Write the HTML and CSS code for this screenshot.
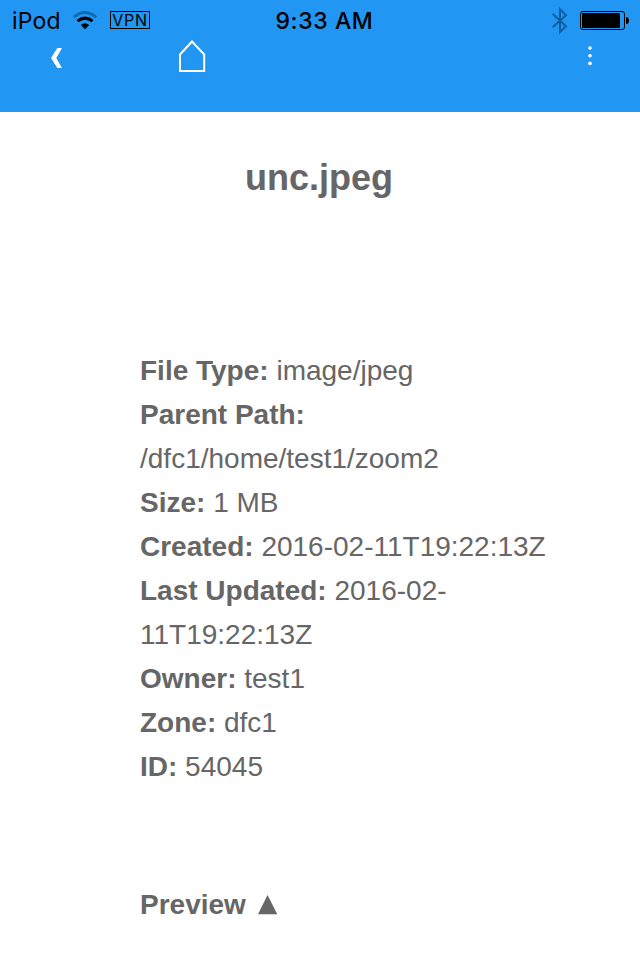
FILE: index.html
```html
<!DOCTYPE html>
<html lang="en">
<head>
<meta charset="utf-8">
<title>unc.jpeg</title>
<link rel="stylesheet" href="styles.css">
</head>
<body>
<header class="header">
  <div class="status">
    <div class="status-left">
      <span class="device">iPod</span>
      <svg class="wifi" width="26" height="20" viewBox="0 0 26 20" fill="none">
        <path d="M.8 7.2Q12 -2.2 23.2 7.2" stroke="#126bb0" stroke-width="2.8"/>
        <path d="M4.5 11.2Q12 5 19.5 11.2" stroke="#000" stroke-width="3"/>
        <path d="M7.9 15Q12 11.4 16.1 15L12 19.2Z" fill="#000"/>
      </svg>
      <span class="vpn">VPN</span>
    </div>
    <span class="time">9:33 AM</span>
    <div class="status-right">
      <svg class="bluetooth" width="16" height="28" viewBox="0 0 16 28" fill="none" stroke="#0d5fa3" stroke-width="2">
        <path d="M.7 7.8L14 20.3L8 26V3.4L14 9.3L.7 21.2"/>
      </svg>
      <svg class="battery" width="50" height="20" viewBox="0 0 50 20">
        <rect x=".5" y="1.5" width="44" height="18" rx="2.5" fill="none" stroke="#000"/>
        <rect x="2" y="3" width="38" height="15" rx="1"/>
        <path d="M46 7Q49 7 49 10.5T46 14Z"/>
      </svg>
    </div>
  </div>
  <nav class="nav">
    <svg class="back" width="12" height="20" viewBox="0 0 12 20" fill="#fff"><path d="M6.3 0H11L5.3 10L11 20H6.3L0 10Z"/></svg>
    <svg class="home" width="28" height="34" viewBox="0 0 28 34" fill="none" stroke="#fff" stroke-width="2"><path d="M2 31V14.5L14 1.5L26.2 14.5V31Z"/></svg>
    <svg class="more" width="4" height="20" viewBox="0 0 4 20" fill="#fff"><circle cx="2" cy="2" r="1.8"/><circle cx="2" cy="9.7" r="1.8"/><circle cx="2" cy="17.4" r="1.8"/></svg>
  </nav>
</header>
<main class="content">
  <h1 class="title">unc.jpeg</h1>
  <div class="details">
    <div><b>File Type:</b> image/jpeg</div>
    <div><b>Parent Path:</b> <span class="path">/dfc1/home/test1/zoom2</span></div>
    <div><b>Size:</b> 1 MB</div>
    <div><b>Created:</b> <span class="path">2016-02-11T19:22:13Z</span></div>
    <div><b>Last Updated:</b> 2016-02-<wbr>11T19:22:13Z</div>
    <div><b>Owner:</b> test1</div>
    <div><b>Zone:</b> dfc1</div>
    <div><b>ID:</b> 54045</div>
  </div>
  <div class="preview">Preview <svg width="20" height="20" viewBox="0 0 20 20" fill="#666"><path d="M9.5 0L19.3 19.3H0Z"/></svg></div>
</main>
</body>
</html>
```
FILE: styles.css
```css
* { box-sizing: border-box; }
body {
  margin: 0;
  background: #fff;
  color: #666;
  font: 28px/44px "Liberation Sans", Arial, sans-serif;
}
svg { display: block; flex: none; }
.header { height: 112px; background: #2196f3; }
.status {
  display: grid;
  grid-template-columns: 1fr auto 1fr;
  align-items: center;
  height: 40px;
  padding: 0 11px 0 12px;
  color: #000;
  font: 23px/38px Inter, sans-serif;
}
.status-left, .status-right { display: flex; align-items: center; }
.status-right { justify-content: flex-end; }
.device { width: 61px; padding-top: 2px; letter-spacing: .2px; }
.vpn {
  width: 40px;
  height: 18px;
  margin-left: 11px;
  border: 1px solid #000;
  font-size: 16px;
  line-height: 17px;
  text-align: center;
  letter-spacing: .7px;
}
.time { padding-top: 2px; font-weight: 550; letter-spacing: .6px; margin-left: 8px; }
.battery { margin: 0 -1px 0 12px; }
.nav { display: flex; align-items: flex-start; padding: 0 48px 0 51px; }
.back { margin-top: 8px; }
.home { margin-left: 115px; }
.more { margin: 6px 0 0 auto; }
.content { padding-top: 44px; }
.title { margin: 0; padding-right: 2px; font-size: 36px; line-height: 44px; text-align: center; }
.details { width: 420px; margin: 149px 0 0 140px; }
.path { white-space: nowrap; }
.preview {
  display: flex;
  align-items: center;
  gap: 12px;
  margin: 94px 0 0 140px;
  font-weight: bold;
}
```
